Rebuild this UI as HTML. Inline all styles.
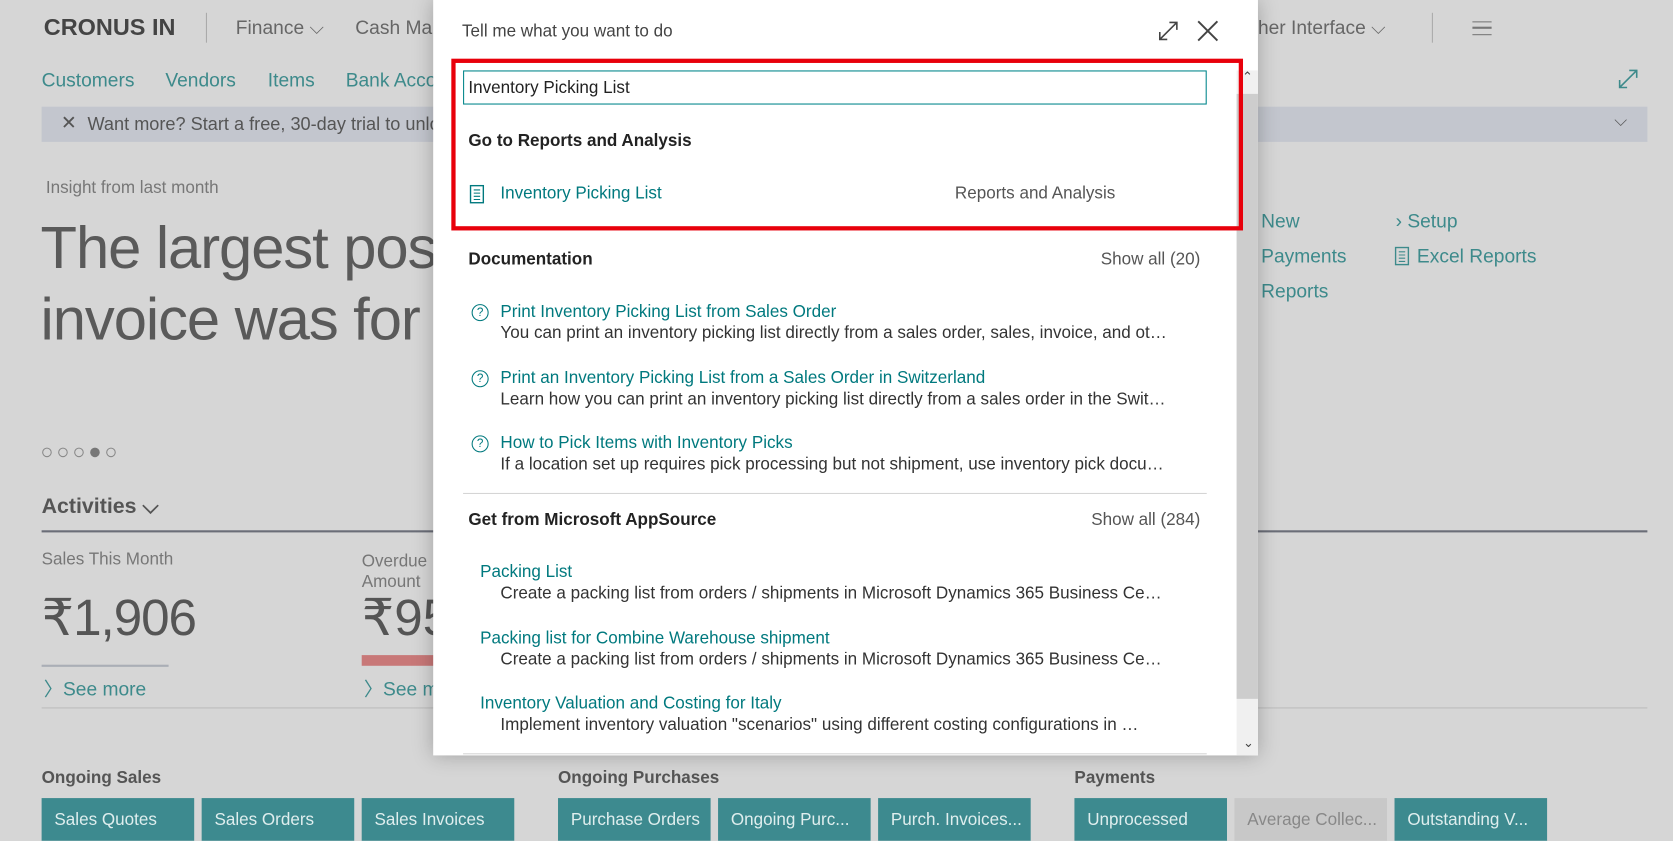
<!DOCTYPE html>
<html><head><meta charset="utf-8"><style>
html,body{margin:0;padding:0;width:1673px;height:836px;overflow:hidden;background:#d6d6d6}
#w{position:absolute;left:0;top:0;width:1568px;height:784px;transform:scale(1.06696);transform-origin:0 0;font-family:"Liberation Sans",sans-serif;}
.a{position:absolute;white-space:nowrap;line-height:1}
.t{color:#3d8a8b}
.g{color:#666}
.tile{position:absolute;top:748px;height:40px;width:143px;background:#3d8a8f;color:#dfeeee;font-size:16px;padding:12px 0 0 12px;box-sizing:border-box}
#m{position:absolute;left:406px;top:0;width:773px;height:708px;background:#fff;box-shadow:0 0 18px rgba(0,0,0,.25)}
#m .a{font-size:16px}
.mt{color:#00797e}
.md{color:#333;width:628px;overflow:hidden;text-overflow:ellipsis}
.b{font-weight:bold;color:#222}
.q{position:absolute;width:14px;height:14px;border:1.3px solid #00797e;border-radius:50%;font-size:11px;color:#00797e;text-align:center;line-height:14px}
</style></head><body><div id="w">
<div class="a" style="left:41px;top:15px;font-size:22px;font-weight:bold;color:#444">CRONUS IN</div>
<div style="position:absolute;left:193px;top:12px;width:1px;height:28px;background:#aaa"></div>
<div class="a g" style="left:221px;top:17px;font-size:18px">Finance ⌵</div>
<div class="a g" style="left:333px;top:17px;font-size:18px">Cash Ma</div>
<div class="a g" style="left:1170px;top:17px;font-size:18px">cher Interface ⌵</div>
<div style="position:absolute;left:1342px;top:12px;width:1px;height:28px;background:#aaa"></div>
<div style="position:absolute;left:1380px;top:20px;width:18px;height:11px;border-top:1.5px solid #777;border-bottom:1.5px solid #777"></div>
<div style="position:absolute;left:1380px;top:25px;width:18px;height:1.5px;background:#777"></div>
<div class="a t" style="left:39px;top:66px;font-size:18px">Customers</div>
<div class="a t" style="left:155px;top:66px;font-size:18px">Vendors</div>
<div class="a t" style="left:251px;top:66px;font-size:18px">Items</div>
<div class="a t" style="left:324px;top:66px;font-size:18px">Bank Acco</div>
<svg style="position:absolute;left:1516px;top:64px" width="20" height="20"><path d="M2 18L18 2M11 2h7v7M2 11v7h7" stroke="#3d8a8b" stroke-width="1.5" fill="none"/></svg>
<div style="position:absolute;left:39px;top:100px;width:1505px;height:33px;background:#c3c6ce"></div>
<div class="a" style="left:57px;top:106px;font-size:18px;color:#555">✕</div>
<div class="a" style="left:82px;top:108px;font-size:17px;color:#555">Want more? Start a free, 30-day trial to unloc</div>
<div class="a" style="left:1513px;top:106px;font-size:16px;color:#555">⌵</div>
<div class="a" style="left:43px;top:169px;font-size:16px;color:#777">Insight from last month</div>
<div class="a" style="left:38px;top:204px;font-size:56px;color:#5a5a5a;letter-spacing:-1px">The largest pos</div>
<div class="a" style="left:38px;top:271px;font-size:56px;color:#5a5a5a;letter-spacing:-1px">invoice was for</div>
<svg style="position:absolute;left:38px;top:418px" width="75" height="12"><g fill="none" stroke="#888"><circle cx="6" cy="6" r="4"/><circle cx="21" cy="6" r="4"/><circle cx="36" cy="6" r="4"/><circle cx="66" cy="6" r="4"/></g><circle cx="51" cy="6" r="4.5" fill="#777"/></svg>
<div class="a" style="left:39px;top:465px;font-size:20px;font-weight:bold;color:#555">Activities ⌵</div>
<div style="position:absolute;left:39px;top:497px;width:1505px;height:2px;background:#6b6e78"></div>
<div class="a" style="left:39px;top:517px;font-size:16px;color:#777">Sales This Month</div>
<div class="a" style="left:39px;top:556px;font-size:48px;color:#555;letter-spacing:-1px">₹1,906</div>
<div style="position:absolute;left:39px;top:623px;width:119px;height:2px;background:#aaaeb6"></div>
<div class="a t" style="left:41px;top:637px;font-size:18px">〉See more</div>
<div class="a" style="left:339px;top:517px;font-size:16px;color:#777;line-height:19px">Overdue<br>Amount</div>
<div class="a" style="left:339px;top:556px;font-size:48px;color:#555">₹95</div>
<div style="position:absolute;left:339px;top:614px;width:80px;height:10px;background:#c87878"></div>
<div class="a t" style="left:341px;top:637px;font-size:18px">〉See m</div>
<div class="a t" style="left:1182px;top:198px;font-size:18px">New</div>
<div class="a t" style="left:1182px;top:231px;font-size:18px">Payments</div>
<div class="a t" style="left:1182px;top:264px;font-size:18px">Reports</div>
<div class="a t" style="left:1308px;top:198px;font-size:18px">› Setup</div>
<svg style="position:absolute;left:1307px;top:231px" width="14" height="18"><rect x="1" y="1" width="12" height="16" fill="none" stroke="#3d8a8b" stroke-width="1.3"/><path d="M4 5h6M4 8h6M4 11h6M4 14h6" stroke="#3d8a8b"/></svg>
<div class="a t" style="left:1328px;top:231px;font-size:18px">Excel Reports</div>
<div style="position:absolute;left:39px;top:663px;width:1505px;height:1px;background:#bdbdbd"></div>
<div class="a" style="left:39px;top:722px;font-size:16px;font-weight:bold;color:#555">Ongoing Sales</div>
<div class="a" style="left:523px;top:722px;font-size:16px;font-weight:bold;color:#555">Ongoing Purchases</div>
<div class="a" style="left:1007px;top:722px;font-size:16px;font-weight:bold;color:#555">Payments</div>
<div class="tile" style="left:39px">Sales Quotes</div>
<div class="tile" style="left:189px">Sales Orders</div>
<div class="tile" style="left:339px">Sales Invoices</div>
<div class="tile" style="left:523px">Purchase Orders</div>
<div class="tile" style="left:673px">Ongoing Purc...</div>
<div class="tile" style="left:823px">Purch. Invoices...</div>
<div class="tile" style="left:1007px">Unprocessed</div>
<div class="tile" style="left:1157px;background:#c8c8c8;color:#888">Average Collec...</div>
<div class="tile" style="left:1307px">Outstanding V...</div>

<div id="m">
<div class="a" style="left:27px;top:22px;color:#444">Tell me what you want to do</div>
<svg style="position:absolute;left:679px;top:19px" width="20" height="20"><path d="M2 18L18 2M11 2h7v7M2 11v7h7" stroke="#444" stroke-width="1.5" fill="none"/></svg>
<svg style="position:absolute;left:716px;top:19px" width="20" height="20"><path d="M1 1L19 19M19 1L1 19" stroke="#444" stroke-width="1.8"/></svg>
<div style="position:absolute;left:753px;top:66px;width:20px;height:642px;background:#f0f0f0"></div>
<div style="position:absolute;left:753px;top:88px;width:20px;height:567px;background:#cdcdcd"></div>
<div class="a" style="left:758px;top:66px;font-size:12px;color:#444">⌃</div>
<div class="a" style="left:759px;top:690px;font-size:12px;color:#444">⌄</div>
<div style="position:absolute;left:28px;top:66px;width:695px;height:30px;border:1px solid #00858a"></div>
<div class="a" style="left:33px;top:75px;color:#222">Inventory Picking List</div>
<div style="position:absolute;left:17px;top:55px;width:734px;height:153px;border:4px solid #e8000b"></div>
<div class="a b" style="left:33px;top:125px">Go to Reports and Analysis</div>
<svg style="position:absolute;left:34px;top:173px" width="14" height="18"><rect x="1" y="1" width="12" height="16" fill="none" stroke="#00797e" stroke-width="1.3"/><path d="M4 5h6M4 8h6M4 11h6M4 14h6" stroke="#00797e"/></svg>
<div class="a mt" style="left:63px;top:174px">Inventory Picking List</div>
<div class="a" style="left:489px;top:174px;color:#555">Reports and Analysis</div>
<div class="a b" style="left:33px;top:236px">Documentation</div>
<div class="a" style="right:54px;top:236px;color:#555">Show all (20)</div>
<div class="q" style="left:36px;top:285px">?</div>
<div class="a mt" style="left:63px;top:285px">Print Inventory Picking List from Sales Order</div>
<div class="a md" style="left:63px;top:305px">You can print an inventory picking list directly from a sales order, sales, invoice, and other documents</div>
<div class="q" style="left:36px;top:347px">?</div>
<div class="a mt" style="left:63px;top:347px">Print an Inventory Picking List from a Sales Order in Switzerland</div>
<div class="a md" style="left:63px;top:367px">Learn how you can print an inventory picking list directly from a sales order in the Switzerland version</div>
<div class="q" style="left:36px;top:408px">?</div>
<div class="a mt" style="left:63px;top:408px">How to Pick Items with Inventory Picks</div>
<div class="a md" style="left:63px;top:428px">If a location set up requires pick processing but not shipment, use inventory pick documents</div>
<div style="position:absolute;left:28px;top:462px;width:697px;height:1px;background:#d5d5d5"></div>
<div class="a b" style="left:33px;top:480px">Get from Microsoft AppSource</div>
<div class="a" style="right:54px;top:480px;color:#555">Show all (284)</div>
<div class="a mt" style="left:44px;top:529px">Packing List</div>
<div class="a md" style="left:63px;top:549px">Create a packing list from orders / shipments in Microsoft Dynamics 365 Business Central</div>
<div class="a mt" style="left:44px;top:591px">Packing list for Combine Warehouse shipment</div>
<div class="a md" style="left:63px;top:611px">Create a packing list from orders / shipments in Microsoft Dynamics 365 Business Central</div>
<div class="a mt" style="left:44px;top:652px">Inventory Valuation and Costing for Italy</div>
<div class="a md" style="left:63px;top:672px;width:600px">Implement inventory valuation "scenarios" using different costing configurations in italy</div>
<div style="position:absolute;left:28px;top:706px;width:697px;height:1px;background:#d5d5d5"></div>
</div>
</div></body></html>
